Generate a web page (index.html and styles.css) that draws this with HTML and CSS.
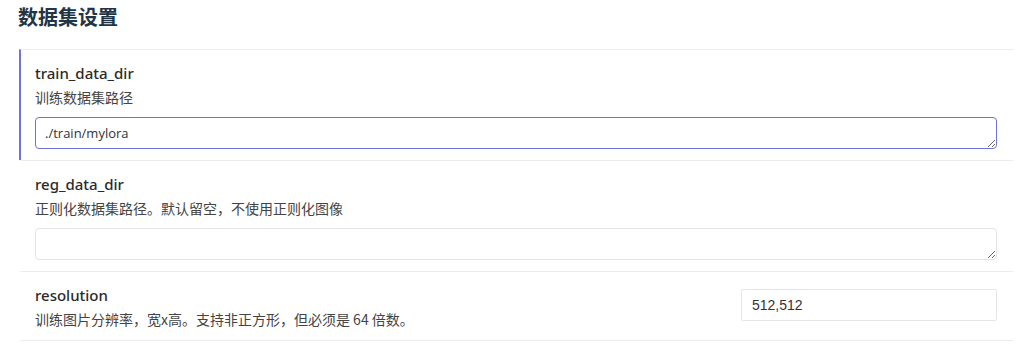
FILE: index.html
```html
<!DOCTYPE html>
<html lang="zh-CN">
<head>
    <meta charset="UTF-8">
    <meta name="viewport" content="width=device-width, initial-scale=1.0">
    <title>数据集设置</title>
    <link rel="stylesheet" href="styles.css">
</head>
<body>
    <div class="page">
        <h2 class="section-title">数据集设置</h2>

        <div class="schema-list">
            <div class="schema-item active">
                <div class="item-label">train_data_dir</div>
                <div class="item-desc">训练数据集路径</div>
                <textarea class="item-textarea" rows="1">./train/mylora</textarea>
            </div>

            <div class="schema-item">
                <div class="item-label">reg_data_dir</div>
                <div class="item-desc">正则化数据集路径。默认留空，不使用正则化图像</div>
                <textarea class="item-textarea" rows="1"></textarea>
            </div>

            <div class="schema-item inline">
                <div class="item-text">
                    <div class="item-label">resolution</div>
                    <div class="item-desc">训练图片分辨率，宽x高。支持非正方形，但必须是 64 倍数。</div>
                </div>
                <input class="item-input" type="text" value="512,512">
            </div>
        </div>
    </div>
</body>
</html>
```

FILE: styles.css
```css
* {
    margin: 0;
    padding: 0;
    box-sizing: border-box;
}

body {
    font-family: "Noto Sans", "Noto Sans CJK SC", sans-serif;
    background: #fff;
    color: #333;
}

.page {
    padding: 0 21px 0 19px;
}

/* Section heading */
.section-title {
    font-size: 20px;
    line-height: 28px;
    font-weight: 700;
    color: #213547;
    padding: 4px 0 0;
    margin: 0 0 17px -1px;
}

/* Schema rows */
.schema-item {
    border-top: 1px solid #ececec;
    border-left: 2px solid transparent;
    padding: 12px 16px 11px 14px;
}

.schema-item:last-child {
    border-bottom: 1px solid #ececec;
}

.schema-item.active {
    border-left-color: #6f72d6;
}

.schema-item.inline {
    display: flex;
    align-items: center;
    justify-content: space-between;
}

.item-label {
    font-size: 15px;
    line-height: 22px;
    font-weight: 500;
    color: #2a2a2a;
    margin-bottom: 3px;
}

.item-desc {
    font-family: "Noto Sans CJK SC", "Noto Sans", sans-serif;
    font-size: 14px;
    line-height: 20px;
    color: #444;
}

.item-textarea {
    display: block;
    width: 100%;
    height: 32px;
    margin-top: 10px;
    padding: 6px 9px;
    font-family: "Open Sans", "Noto Sans CJK SC", sans-serif;
    font-size: 13px;
    line-height: 18px;
    color: #333;
    border: 1px solid #e3e3e3;
    border-radius: 4px;
    resize: vertical;
    outline: none;
}

.schema-item.active .item-textarea {
    border-color: #6f72d6;
}

.item-input {
    width: 256px;
    height: 32px;
    margin-top: -3px;
    padding: 0 10px;
    font-family: "Liberation Sans", sans-serif;
    font-size: 14px;
    color: #333;
    border: 1px solid #e6e6e6;
    border-radius: 2px;
    outline: none;
}
```
